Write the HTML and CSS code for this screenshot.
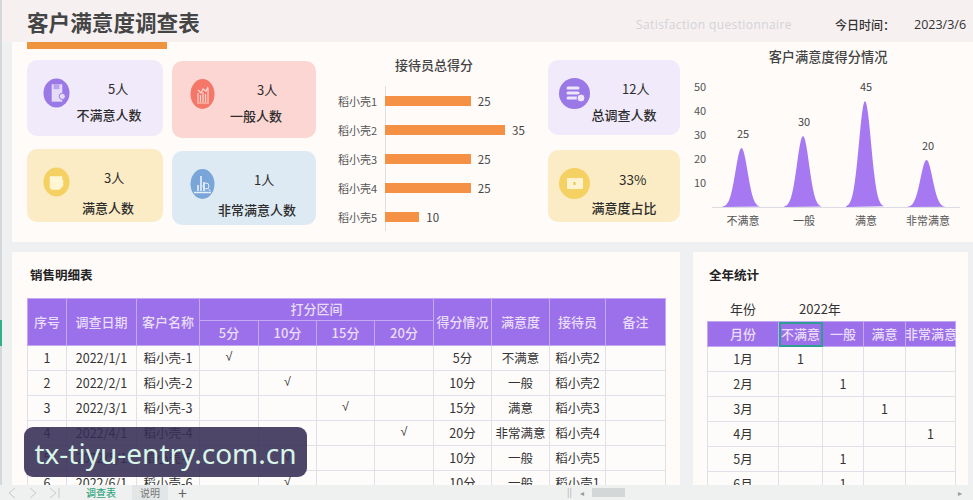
FILE: index.html
```html
<!DOCTYPE html>
<html lang="zh-CN">
<head>
  <meta charset="UTF-8">
  <title>客户满意度调查表</title>
  <link rel="stylesheet" href="styles.css">
</head>
<body>
  <div class="sheet">
    <div class="rail"><span class="rail-mark"></span></div>
    <div class="main">
      <header class="topbar">
        <h1>客户满意度调查表</h1>
        <span class="subtitle">Satisfaction questionnaire</span>
        <span class="today">今日时间：</span>
        <span class="date">2023/3/6</span>
      </header>

      <section class="dash">
        <div class="rule"></div>

        <div class="tiles tiles-a">
          <div class="tile purple">
            <svg class="ico" viewBox="0 0 28 30"><ellipse cx="14" cy="15" rx="13.5" ry="15" fill="#9a78e6"/><path d="M9 6h11v18H9z" fill="#e6dcf8"/><path d="M11 6v5h6V6" fill="#b9a3ee"/><circle cx="20" cy="18.500" r="3.200" fill="#e6dcf8" stroke="#9a78e6"/></svg>
            <div class="num">5人</div>
            <div class="cap">不满意人数</div>
          </div>
          <div class="tile yellow">
            <svg class="ico" viewBox="0 0 28 30"><ellipse cx="14" cy="15" rx="13.5" ry="15" fill="#f5d163"/><path d="M7 9h13v4h1v6l-4 4H9l-2-2z" fill="#fff6d6"/></svg>
            <div class="num">3人</div>
            <div class="cap">满意人数</div>
          </div>
        </div>

        <div class="tiles tiles-b">
          <div class="tile pink">
            <svg class="ico" viewBox="0 0 25 30"><ellipse cx="12.500" cy="15" rx="12" ry="15" fill="#f4776a"/><path d="M8 23v-9M10.500 23v-7M13 23v-10M15.500 23v-8M18 23V9M7 24h12M8 11l3 3 2-4 3 2 2-4" fill="none" stroke="#fbd5ce" stroke-width="1.200"/></svg>
            <div class="num">3人</div>
            <div class="cap">一般人数</div>
          </div>
          <div class="tile blue">
            <svg class="ico" viewBox="0 0 25 30"><ellipse cx="12.500" cy="15" rx="12" ry="15" fill="#79a5d8"/><path d="M8 22v-6M11 22V7M14 22v-9M4 23.500h17" fill="none" stroke="#e6f0fa" stroke-width="1.600"/><circle cx="16" cy="17" r="3" fill="none" stroke="#e6f0fa"/><path d="M18 19.500l2.500 2.500" stroke="#e6f0fa"/></svg>
            <div class="num">1人</div>
            <div class="cap">非常满意人数</div>
          </div>
        </div>

        <div class="bars">
          <h3>接待员总得分</h3>
          <div class="bar-list" id="barList"></div>
        </div>

        <div class="tiles tiles-c">
          <div class="tile purple">
            <svg class="ico" viewBox="0 0 31 31"><circle cx="15.500" cy="15.500" r="15.500" fill="#9a78e6"/><path d="M9 10h10M9 15h10M9 20h10" stroke="#eee6fb" stroke-width="3" stroke-linecap="round"/><circle cx="22" cy="20" r="4" fill="#eee6fb" stroke="#9a78e6"/></svg>
            <div class="num">12人</div>
            <div class="cap">总调查人数</div>
          </div>
          <div class="tile yellow">
            <svg class="ico" viewBox="0 0 31 31"><circle cx="15.500" cy="15.500" r="15.500" fill="#f5d163"/><rect x="8" y="10" width="16" height="11" rx="1" fill="#fdf3cf"/><path d="M14.500 14h2v3h-2z" fill="#e8c455"/></svg>
            <div class="num">33%</div>
            <div class="cap">满意度占比</div>
          </div>
        </div>

        <div class="area">
          <h3>客户满意度得分情况</h3>
          <svg class="area-svg" viewBox="0 0 285 190">
            <g class="axis">
              <text x="13" y="43">50</text>
              <text x="13" y="67">40</text>
              <text x="13" y="91">30</text>
              <text x="13" y="115">20</text>
              <text x="13" y="139">10</text>
            </g>
            <path d="M31 159.500H279" stroke="#dcdce4" fill="none"/>
            <g id="peaks" fill="#a678f2"></g>
            <g class="vals">
              <text x="62" y="90">25</text>
              <text x="123" y="78">30</text>
              <text x="185" y="43">45</text>
              <text x="247" y="102">20</text>
            </g>
            <g class="cats">
              <text x="62" y="177">不满意</text>
              <text x="123" y="177">一般</text>
              <text x="185" y="177">满意</text>
              <text x="247" y="177">非常满意</text>
            </g>
          </svg>
        </div>
      </section>

      <div class="lower">
        <section class="card card-detail">
          <h2>销售明细表</h2>
          <table class="grid detail">
            <colgroup>
              <col style="width:39px"><col style="width:70px"><col style="width:63px">
              <col style="width:59px"><col style="width:58px"><col style="width:58px"><col style="width:59px">
              <col style="width:58px"><col style="width:58px"><col style="width:56px"><col style="width:60px">
            </colgroup>
            <thead>
              <tr class="h1">
                <th rowspan="2">序号</th><th rowspan="2">调查日期</th><th rowspan="2">客户名称</th>
                <th colspan="4">打分区间</th>
                <th rowspan="2">得分情况</th><th rowspan="2">满意度</th><th rowspan="2">接待员</th><th rowspan="2">备注</th>
              </tr>
              <tr class="h2"><th>5分</th><th>10分</th><th>15分</th><th>20分</th></tr>
            </thead>
            <tbody id="detailBody"></tbody>
          </table>
        </section>

        <section class="card card-year">
          <h2>全年统计</h2>
          <div class="year-row"><span class="year-k">年份</span><span class="year-v">2022年</span></div>
          <table class="grid year">
            <colgroup>
              <col style="width:71px"><col style="width:44px"><col style="width:41px"><col style="width:42px"><col style="width:50px">
            </colgroup>
            <thead>
              <tr class="h2"><th>月份</th><th class="picked">不满意</th><th>一般</th><th>满意</th><th class="clip"><span>非常满意</span></th></tr>
            </thead>
            <tbody id="yearBody"></tbody>
          </table>
        </section>
      </div>

      <footer class="tabs">
        <svg class="nav" viewBox="0 0 60 15"><path d="M15 3l-6 5 6 5M30 3l6 5-6 5M50 3l6 5-6 5M59 3v10" fill="none" stroke="#c6caca"/></svg>
        <span class="tab on">调查表</span>
        <span class="tab">说明</span>
        <span class="add">+</span>
        <span class="pause">||</span>
        <span class="left">◂</span>
        <span class="thumb"></span>
        <span class="right">▸</span>
      </footer>
    </div>

    <div class="stamp">tx-tiyu-entry.com.cn</div>
  </div>

  <script>
    // bars: 3.43px per point
    var staff = [['稻小壳1', 25], ['稻小壳2', 35], ['稻小壳3', 25], ['稻小壳4', 25], ['稻小壳5', 10]];
    document.getElementById('barList').innerHTML = staff.map(function (s) {
      return '<div class="bar-row"><span class="bar-name">' + s[0] + '</span>' +
        '<span class="bar-fill" style="width:' + (s[1] * 3.43) + 'px"></span>' +
        '<span class="bar-val">' + s[1] + '</span></div>';
    }).join('');

    // bell shaped peaks: centre x, top y
    var peaks = [[60.5, 100], [122, 88], [184, 53], [245.5, 112]];
    document.getElementById('peaks').innerHTML = peaks.map(function (p) {
      var d = 'M' + (p[0] - 19) + ' 159';
      for (var t = -19; t <= 19; t++) {
        d += 'L' + (p[0] + t) + ' ' + (159 - (159 - p[1]) * Math.exp(-t * t / 72)).toFixed(1);
      }
      return '<path d="' + d + 'Z"/>';
    }).join('');

    // rows: no, date, name, tick column, score, level, staff
    var rows = [
      [1, '2022/1/1', '稻小壳-1', 0, '5分', '不满意', '稻小壳2'],
      [2, '2022/2/1', '稻小壳-2', 1, '10分', '一般', '稻小壳2'],
      [3, '2022/3/1', '稻小壳-3', 2, '15分', '满意', '稻小壳3'],
      [4, '2022/4/1', '稻小壳-4', 3, '20分', '非常满意', '稻小壳4'],
      [5, '2022/5/1', '稻小壳-5', 1, '10分', '一般', '稻小壳5'],
      [6, '2022/6/1', '稻小壳-6', 1, '10分', '一般', '稻小壳1']
    ];
    document.getElementById('detailBody').innerHTML = rows.map(function (r) {
      var ticks = '';
      for (var i = 0; i < 4; i++) ticks += i === r[3] ? '<td class="tick">√</td>' : '<td></td>';
      return '<tr><td>' + r[0] + '</td><td>' + r[1] + '</td><td>' + r[2] + '</td>' + ticks +
        '<td>' + r[4] + '</td><td>' + r[5] + '</td><td>' + r[6] + '</td><td></td></tr>';
    }).join('');

    var months = [0, 1, 2, 3, 1, 1];
    document.getElementById('yearBody').innerHTML = months.map(function (m, n) {
      var cells = '';
      for (var i = 0; i < 4; i++) cells += '<td>' + (i === m ? '1' : '') + '</td>';
      return '<tr><td>' + (n + 1) + '月</td>' + cells + '</tr>';
    }).join('');
  </script>
</body>
</html>
```

FILE: styles.css
```css
* {
  box-sizing: border-box;
}
html, body {
  margin: 0;
  height: 100%;
  overflow: hidden;
}
body {
  font-family: "Noto Sans CJK SC", "Noto Sans", sans-serif;
  color: #333;
  background: #eef0f1;
}
h1, h2, h3 {
  margin: 0;
}
.sheet {
  position: relative;
  display: flex;
  width: 973px;
  height: 500px;
  overflow: hidden;
}
.rail {
  width: 2px;
  background: #d5d8da;
  padding-top: 320px;
}
.rail-mark {
  display: block;
  width: 2px;
  height: 26px;
  background: #2fb088;
}
.main {
  flex: 1;
  display: flex;
  flex-direction: column;
  min-width: 0;
}

/* top bar */
.topbar {
  height: 42px;
  display: flex;
  align-items: center;
  padding-left: 25px;
  background: #f6f0f1;
  flex: none;
  padding-top: 6px;
}
.topbar h1 {
  width: 609px;
  font-size: 21.6px;
  line-height: 36px;
  font-weight: 700;
  color: #454545;
  margin-top: -4px;
}
.subtitle {
  width: 199px;
  font-size: 12px;
  font-family: "Open Sans", sans-serif;
  letter-spacing: .4px;
  color: #d3d3d6;
}
.today {
  width: 79px;
  font-size: 12px;
  font-weight: 500;
}
.date {
  font-size: 12.5px;
  font-family: "Open Sans", sans-serif;
}

/* dashboard */
.dash {
  position: relative;
  height: 200px;
  flex: none;
  display: flex;
  margin-left: 10px;
  padding: 18px 0 0 15px;
  background: #fefbf9;
}
.rule {
  position: absolute;
  left: 15px;
  top: 0;
  width: 140px;
  height: 7px;
  background: #f0933f;
}
.tiles {
  display: flex;
  flex-direction: column;
  flex: none;
}
.tiles-a {
  width: 136px;
  margin-right: 9px;
  gap: 13px;
}
.tiles-a .tile:nth-child(1) { height: 76px; }
.tiles-a .tile:nth-child(2) { height: 73px; }
.tiles-b {
  width: 144px;
  padding-top: 1px;
  gap: 13px;
}
.tiles-b .tile:nth-child(1) { height: 77px; }
.tiles-b .tile:nth-child(2) { height: 74px; }
.tiles-c {
  width: 132px;
  gap: 15px;
}
.tiles-c .tile:nth-child(1) { height: 75px; }
.tiles-c .tile:nth-child(2) { height: 72px; }
.tile {
  position: relative;
  border-radius: 10px;
  display: grid;
  grid-template-columns: 44px 1fr;
  grid-template-rows: 36px 1fr;
  color: #2c2c2c;
}
.purple { background: #f1eafa; }
.pink { background: #fbd6d3; }
.yellow { background: #fcecc5; }
.blue { background: #deeaf3; }
.ico {
  grid-row: 1 / 3;
  margin: 18px 0 0 16px;
  width: 27px;
  height: 30px;
}
.tiles-b .ico { width: 25px; margin-left: 18px; }
.tiles-c .ico { width: 31px; height: 31px; margin: 18px 0 0 11px; }
.num {
  font-size: 13px;
  line-height: 18px;
  padding-top: 20px;
}
.tiles-a .tile:nth-child(1) .num { padding-left: 37px; }
.tiles-a .tile:nth-child(2) .num { padding-left: 33px; }
.tiles-b .tile:nth-child(1) .num { padding-left: 41px; }
.tiles-b .tile:nth-child(2) .num { padding-left: 38px; }
.tiles-c .tile:nth-child(1) .num { padding-left: 30px; }
.tiles-c .tile:nth-child(2) .num { padding-left: 27px; font-size: 13.5px; }
.cap {
  grid-column: 1 / 3;
  position: absolute;
  left: 0;
  right: 0;
  top: 46px;
  font-size: 13px;
  line-height: 18px;
  font-weight: 500;
  text-align: center;
}
.tiles-a .tile:nth-child(1) .cap { padding-left: 28px; }
.tiles-a .tile:nth-child(2) .cap { padding-left: 26px; top: 50px; }
.tiles-b .tile:nth-child(1) .cap { padding-left: 24px; }
.tiles-b .tile:nth-child(2) .cap { padding-left: 26px; top: 50px; }
.tiles-c .tile:nth-child(1) .cap { padding-left: 20px; }
.tiles-c .tile:nth-child(2) .cap { padding-left: 20px; top: 49px; }

/* bar chart */
.bars {
  width: 232px;
  flex: none;
}
.bars h3 {
  font-size: 13px;
  font-weight: 500;
  color: #444;
  text-align: center;
  line-height: 18px;
  margin-top: -4px;
  padding-left: 4px;
}
.bar-list {
  margin: 12px 0 0 22px;
  background: linear-gradient(#dcdfe4, #dcdfe4) 47px 0 / 1px 100% no-repeat;
}
.bar-row {
  display: flex;
  align-items: center;
  height: 29px;
}
.bar-name {
  width: 47px;
  font-size: 11px;
  color: #555;
  flex: none;
}
.bar-fill {
  height: 10px;
  background: #f59144;
  flex: none;
}
.bar-val {
  margin-left: 7px;
  font-size: 11.5px;
  color: #444;
}

/* area chart */
.area {
  flex: 1;
  min-width: 0;
}
.area h3 {
  font-size: 13.2px;
  font-weight: 500;
  color: #444;
  text-align: center;
  line-height: 18px;
  margin: -12px 0 0;
  padding-left: 3px;
}
.area-svg {
  display: block;
  width: 285px;
  height: 190px;
  margin: -18px 0 0 1px;
}
.area-svg text {
  font-size: 11px;
  fill: #444;
}
.axis text {
  fill: #555;
}
.vals text, .cats text {
  text-anchor: middle;
}
.cats text {
  fill: #555;
}

/* lower cards */
.lower {
  flex: 1;
  min-height: 0;
  display: flex;
  gap: 13px;
  padding: 10px 5px 0 10px;
  overflow: hidden;
}
.card {
  background: #fefbf9;
  height: 240px;
}
.card h2 {
  font-size: 12.5px;
  line-height: 18px;
  font-weight: 700;
  color: #222;
}
.card-detail {
  width: 668px;
  padding: 14px 0 0 15px;
}
.card-detail h2 { padding-left: 3px; }
.card-year {
  width: 275px;
  padding: 14px 0 0 14px;
}
.card-year h2 { padding-left: 2px; }

.grid {
  border-collapse: collapse;
  table-layout: fixed;
  font-size: 12.5px;
  color: #333;
}
.detail {
  width: 638px;
  margin-top: 14px;
}
.year {
  width: 248px;
}
.grid th, .grid td {
  padding: 0 0 2px;
  text-align: center;
  border: 1px solid #dfe0e8;
  white-space: nowrap;
}
.grid th {
  background: #9c70ea;
  color: #e9def9;
  font-size: 13px;
  font-weight: 500;
  border-color: #c3a9f2;
}
.grid td {
  height: 25px;
  background: #fdfcfb;
}
.grid .tick {
  font-family: "Liberation Sans", sans-serif;
}
.h1 th { height: 22px; }
.h2 th { height: 25px; }
.year-row {
  display: flex;
  height: 26px;
  margin-top: 11px;
  align-items: center;
  font-size: 13px;
  color: #333;
}
.year-k { width: 92px; padding-left: 23px; }
.picked {
  outline: 2px solid #2f9c96;
  outline-offset: -2px;
}
.clip span {
  display: block;
  width: 50px;
  overflow: hidden;
  text-indent: -1px;
}

/* sheet tabs */
.tabs {
  height: 15px;
  flex: none;
  position: relative;
  display: flex;
  align-items: center;
  background: #eef1f0;
  font-size: 10px;
  color: #888;
  margin-left: -2px;
}
.nav {
  width: 60px;
  height: 15px;
  flex: none;
}
.tab {
  text-align: center;
  line-height: 15px;
}
.tab.on {
  margin-left: 19px;
  width: 44px;
  color: #35a57f;
  font-weight: 500;
}
.tab:not(.on) {
  background: #e2e6e6;
  width: 36px;
  margin-left: 9px;
  color: #777;
}
.add {
  margin-left: 10px;
  font-size: 16px;
  line-height: 15px;
  color: #666;
}
.pause {
  position: absolute;
  left: 567px;
  font-size: 9px;
  color: #aaa;
}
.left {
  position: absolute;
  left: 580px;
  color: #999;
  font-size: 8px;
}
.thumb {
  position: absolute;
  left: 592px;
  top: 3px;
  width: 33px;
  height: 9px;
  background: #d3d7d8;
}
.right {
  position: absolute;
  left: 958px;
  color: #999;
  font-size: 8px;
}

/* watermark banner */
.stamp {
  position: absolute;
  left: 24px;
  top: 427px;
  width: 283px;
  height: 50px;
  border-radius: 9px;
  background: rgba(52, 44, 84, .88);
  color: #d9f5e8;
  font-family: "Noto Sans", sans-serif;
  font-size: 28px;
  line-height: 52px;
  text-align: center;
  white-space: nowrap;
}
```
